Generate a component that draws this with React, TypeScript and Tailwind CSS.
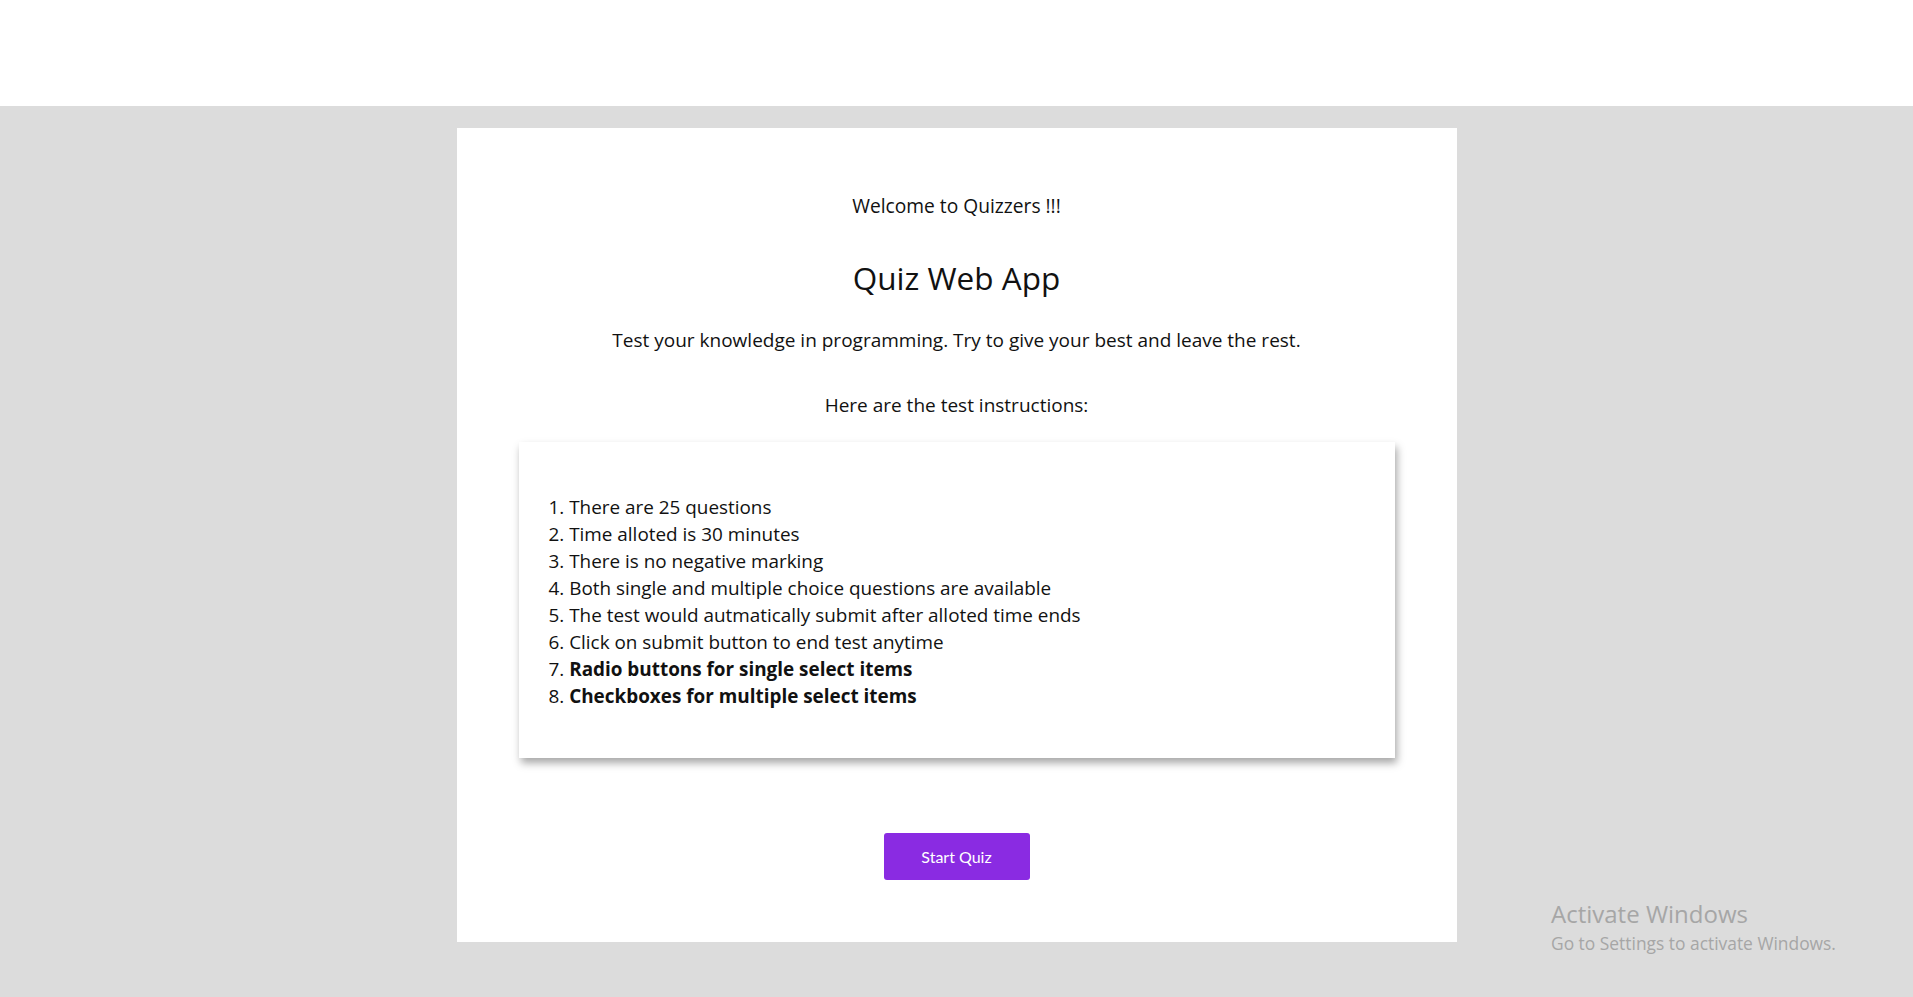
import React from "react";

const items = [
  "There are 25 questions",
  "Time alloted is 30 minutes",
  "There is no negative marking",
  "Both single and multiple choice questions are available",
  "The test would autmatically submit after alloted time ends",
  "Click on submit button to end test anytime",
];

export default function App() {
  return (
    <div className="min-h-[997px] bg-[#dcdcdc] text-[#111]" style={{ fontFamily: "'Open Sans', Lato, sans-serif" }}>
      <div className="h-[106px] bg-white" />
      <div className="pt-[22px] pb-[55px]">
        <div className="mx-auto flex w-[1000px] flex-col items-center bg-white pt-[64px] pb-[62px]">
          <p className="text-[19.2px] leading-[27px]">Welcome to Quizzers !!!</p>
          <h1 className="mt-[39px] text-[31.5px] leading-[40px]">Quiz Web App</h1>
          <p className="mt-[29px] text-[19px] leading-[27px]">
            Test your knowledge in programming. Try to give your best and leave the rest.
          </p>
          <p className="mt-[38px] text-[19px] leading-[27px]">Here are the test instructions:</p>
          <div className="mt-[23px] w-[876px] bg-white pl-[30px] pt-[52px] pb-[48px] shadow-[2px_5px_8px_rgba(0,0,0,0.35)]">
            <ol className="list-inside list-decimal text-[18.9px] leading-[27px]">
              {items.map((t) => (
                <li key={t}>{t}</li>
              ))}
              <li>
                <b className="font-bold">Radio buttons for single select items</b>
              </li>
              <li>
                <b className="font-bold">Checkboxes for multiple select items</b>
              </li>
            </ol>
          </div>
          <button className="mt-[75px] h-[47px] w-[146px] rounded-[3px] bg-[#8a2be2] text-[16px] text-white" style={{ fontFamily: "Lato, sans-serif" }}>
            Start Quiz
          </button>
        </div>
      </div>
      <div className="pointer-events-none absolute left-[1551px] top-[898px] text-[#a6a6a6]" style={{ fontFamily: "'Open Sans', sans-serif" }}>
        <div className="text-[24px] leading-[32px]">Activate Windows</div>
        <div className="text-[17.4px] leading-[27px]">Go to Settings to activate Windows.</div>
      </div>
    </div>
  );
}
